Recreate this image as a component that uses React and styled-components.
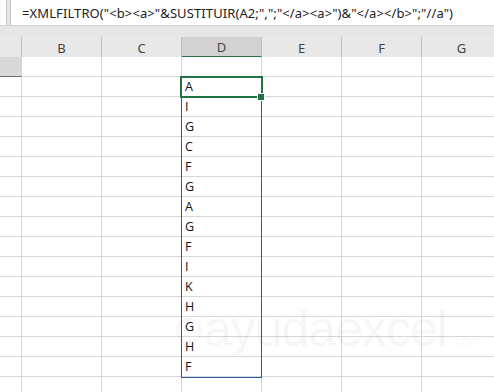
import React from "react";
import styled, { createGlobalStyle } from "styled-components";

const GlobalStyle = createGlobalStyle`
  html, body { margin: 0; padding: 0; background: #ffffff; }
  * { box-sizing: border-box; }
`;

const Page = styled.div`
  position: relative;
  width: 494px;
  height: 392px;
  overflow: hidden;
  background: #ffffff;
  font-family: "Open Sans", "Noto Sans", sans-serif;
`;

const Top = styled.div`
  display: flex;
  flex-direction: column;
  background: #e6e6e6;
  height: 37px;
`;

const FormulaBar = styled.div`
  display: flex;
  height: 26px;
  gap: 3px;
  border-bottom: 1px solid #d0d0d0;
`;

const NameBox = styled.div`
  width: 7px;
  background: #ffffff;
  border-right: 1px solid #c8c8c8;
`;

const FormulaInput = styled.div`
  flex: 1;
  background: #ffffff;
  border-left: 1px solid #c8c8c8;
  padding-left: 11px;
  display: flex;
  align-items: center;
  font-family: "Noto Sans", "Open Sans", sans-serif;
  font-size: 13px;
  color: #222;
  white-space: nowrap;
  letter-spacing: 0.1px;
`;

const SheetWrap = styled.div`
  position: relative;
`;

const Grid = styled.div`
  display: grid;
  grid-template-columns: 22px repeat(6, 80px);
  grid-auto-rows: 20px;
  width: 502px;
`;

const HeaderCell = styled.div`
  height: 21px;
  background: ${(p) => (p.$selected ? "#d2d2d2" : "#e8e8e8")};
  border-right: 1px solid #bdbdbd;
  border-bottom: ${(p) => (p.$selected ? "2px solid #217346" : "1px solid #c6c6c6")};
  display: flex;
  align-items: center;
  justify-content: center;
  font-family: "Noto Sans", "Open Sans", sans-serif;
  font-size: 13px;
  color: #444;
  padding-top: 1px;
`;

const Cell = styled.div`
  height: 20px;
  background: ${(p) => (p.$shade ? "#d9d9d9" : "#ffffff")};
  border-right: 1px solid #d6d6d6;
  border-bottom: ${(p) => (p.$shade ? "1px solid #6e6e6e" : "1px solid #d6d6d6")};
  display: flex;
  align-items: center;
  padding-left: 3px;
  font-family: "Open Sans", "Noto Sans", sans-serif;
  font-size: 12.5px;
  color: #111;
`;

const RangeBox = styled.div`
  position: absolute;
  left: 181px;
  top: 40px;
  width: 81px;
  height: 301px;
  border: 1px solid #2f5aa6;
  pointer-events: none;
`;

const ActiveBox = styled.div`
  position: absolute;
  left: 180px;
  top: 39px;
  width: 83px;
  height: 22px;
  border: 2px solid #217346;
  pointer-events: none;
`;

const FillHandle = styled.div`
  position: absolute;
  left: 258px;
  top: 57px;
  width: 6px;
  height: 6px;
  background: #217346;
  outline: 1px solid #ffffff;
`;

const Watermark = styled.div`
  position: absolute;
  left: 204px;
  top: 300px;
  display: flex;
  align-items: baseline;
  gap: 4px;
  color: rgba(0, 0, 0, 0.035);
  font-family: "Liberation Sans", sans-serif;
  pointer-events: none;
`;

const WmMain = styled.span`
  font-size: 50px;
  font-weight: 300;
  letter-spacing: -1px;
`;

const WmSmall = styled.span`
  font-size: 14px;
`;

const WmRing = styled.div`
  position: absolute;
  left: 176px;
  top: 318px;
  width: 26px;
  height: 26px;
  border-radius: 50%;
  border: 3px solid rgba(0, 0, 0, 0.03);
`;

const columns = ["", "B", "C", "D", "E", "F", "G"];
const values = ["A", "I", "G", "C", "F", "G", "A", "G", "F", "I", "K", "H", "G", "H", "F"];
const rows = ["", ...values, ""];

export default function App() {
  return (
    <>
      <GlobalStyle />
      <Page>
        <Top>
          <FormulaBar>
            <NameBox />
            <FormulaInput>
              {'=XMLFILTRO("<b><a>"&SUSTITUIR(A2;",";"</a><a>")&"</a></b>";"//a")'}
            </FormulaInput>
          </FormulaBar>
        </Top>
        <SheetWrap>
          <Grid>
            {columns.map((c, i) => (
              <HeaderCell key={"h" + i} $selected={c === "D"}>
                {c}
              </HeaderCell>
            ))}
            {rows.map((v, r) =>
              columns.map((c, i) => (
                <Cell key={r + "-" + i} $shade={r === 0 && i === 0}>
                  {c === "D" ? v : ""}
                </Cell>
              ))
            )}
          </Grid>
          <RangeBox />
          <ActiveBox />
          <FillHandle />
        </SheetWrap>
        <WmRing />
        <Watermark>
          <WmMain>ayudaexcel</WmMain>
          <WmSmall>.com</WmSmall>
        </Watermark>
      </Page>
    </>
  );
}
